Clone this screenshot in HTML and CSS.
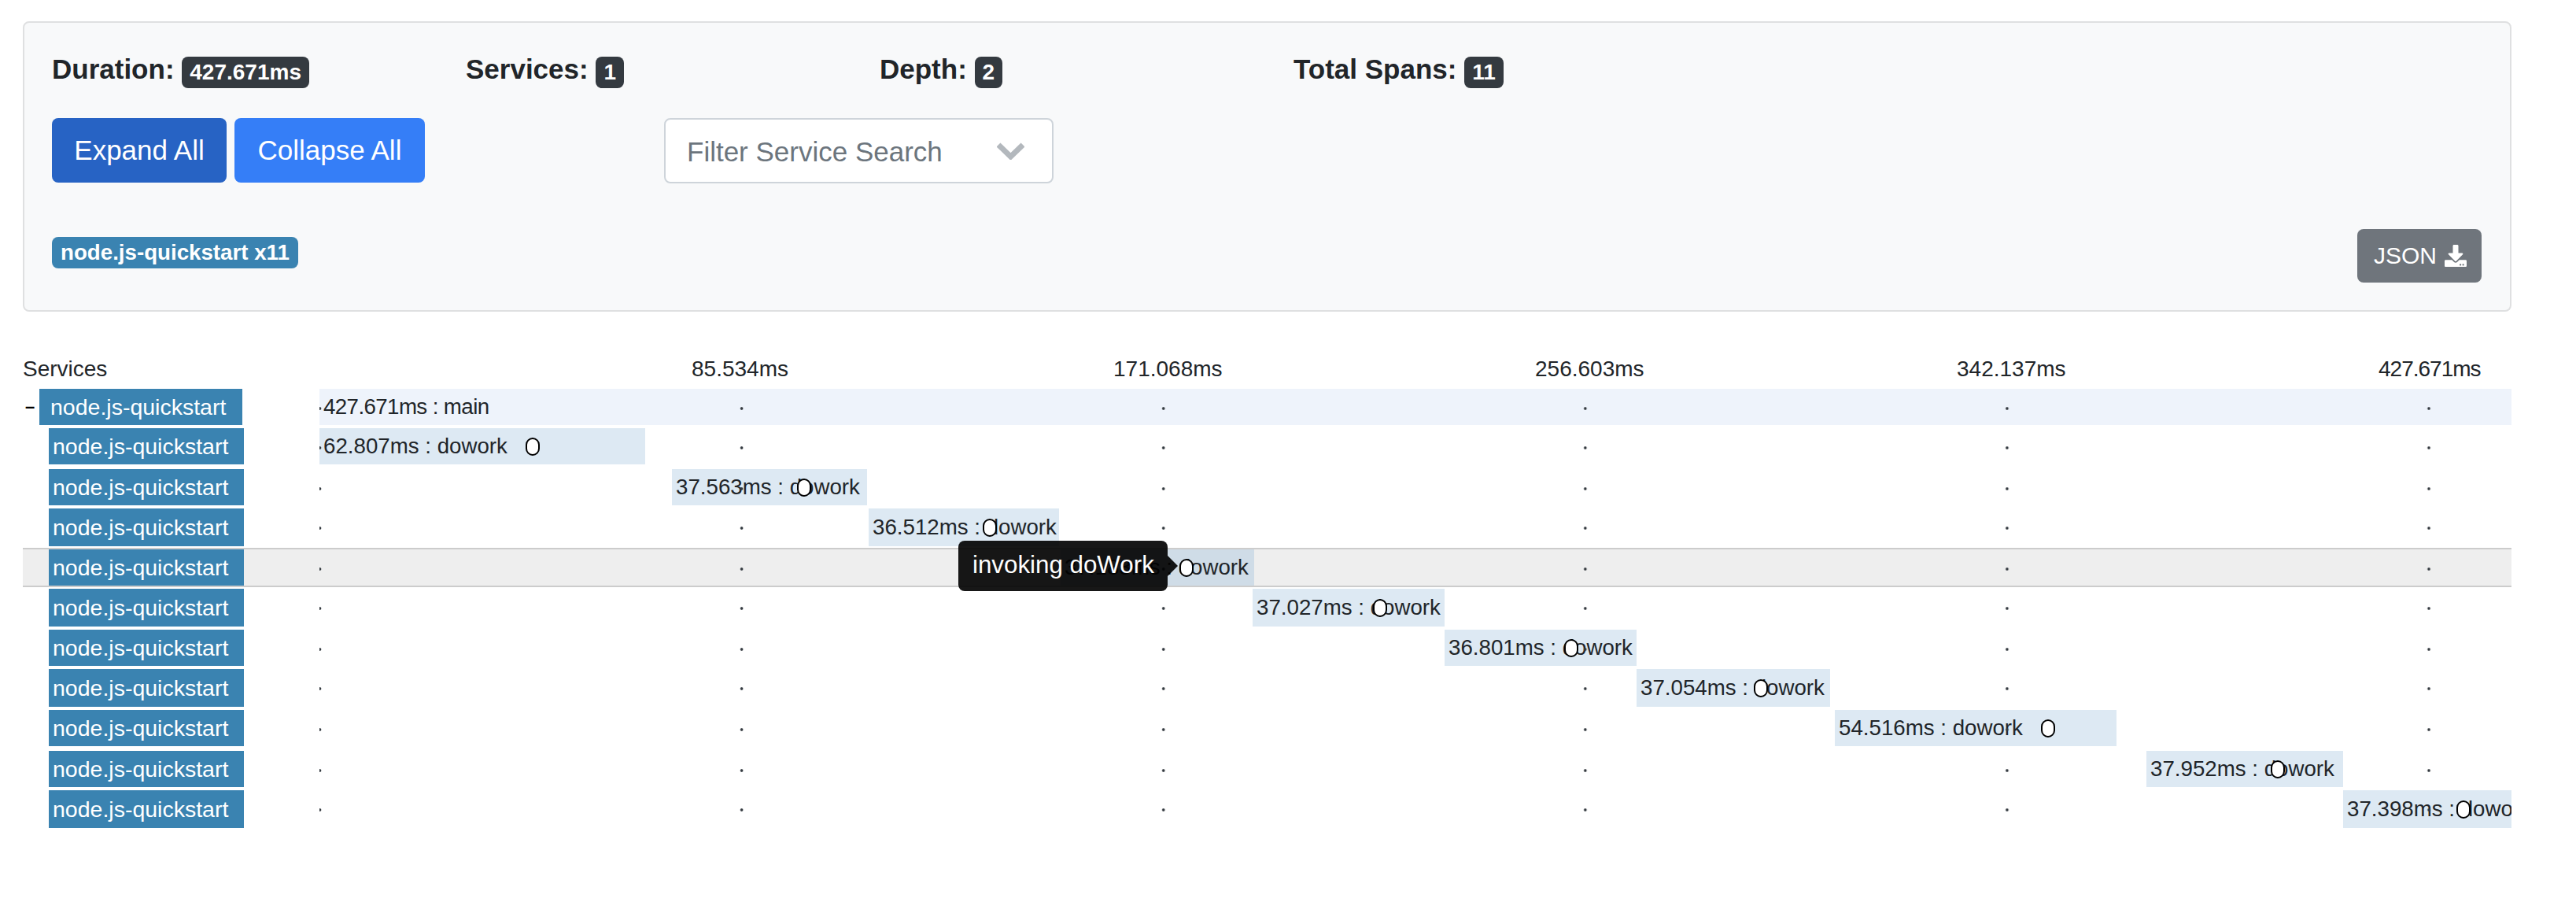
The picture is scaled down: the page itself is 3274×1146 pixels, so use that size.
FILE: index.html
```html
<!DOCTYPE html>
<html>
	<head>
		<title>Trace</title>
		<link rel="stylesheet" href="styles.css">
	</head>
	<body>
		<div class="card">
			<div class="stats">
				<div class="stat">Duration: <span class="badge">427.671ms</span></div>
				<div class="stat">Services: <span class="badge">1</span></div>
				<div class="stat">Depth: <span class="badge">2</span></div>
				<div class="stat">Total Spans: <span class="badge">11</span></div>
			</div>
			<div class="controls">
				<button class="btn btn-active">Expand All</button>
				<button class="btn">Collapse All</button>
				<div class="filter">
					<span>Filter Service Search</span>
					<svg class="chevron" viewBox="0 0 35 22"><path d="M2 3 L17.5 18 L33 3" fill="none" stroke="#b3b8bd" stroke-width="7"/></svg>
				</div>
			</div>
			<div class="footer">
				<span class="service-badge">node.js-quickstart x11</span>
				<button class="btn-json">JSON
					<svg class="download" viewBox="0 0 512 512"><path fill="#fff" d="M216 0h80c13.3 0 24 10.7 24 24v168h87.7c17.8 0 26.7 21.5 14.1 34.1L269.7 378.3c-7.5 7.5-19.8 7.5-27.3 0L90.1 226.1c-12.6-12.6-3.7-34.1 14.1-34.1H192V24c0-13.3 10.7-24 24-24zm296 376v112c0 13.3-10.7 24-24 24H24c-13.3 0-24-10.7-24-24V376c0-13.3 10.7-24 24-24h146.7l49 49c20.1 20.1 52.5 20.1 72.6 0l49-49H488c13.3 0 24 10.7 24 24zm-124 88c0-11-9-20-20-20s-20 9-20 20 9 20 20 20 20-9 20-20zm64 0c0-11-9-20-20-20s-20 9-20 20 9 20 20 20 20-9 20-20z"/></svg>
				</button>
			</div>
		</div>

		<div class="scale">
			<div class="scale-title">Services</div>
			<div class="scale-label">85.534ms</div>
			<div class="scale-label">171.068ms</div>
			<div class="scale-label">256.603ms</div>
			<div class="scale-label">342.137ms</div>
			<div class="scale-label scale-last">427.671ms</div>
		</div>

		<div class="row row-root">
			<span class="toggle">–</span>
			<div class="service">node.js-quickstart</div>
			<div class="timeline">
				<div class="span span-root" style="left:0;width:2786px">427.671ms : main</div>
			</div>
		</div>
		<div class="row row-gap">
			<div class="service">node.js-quickstart</div>
			<div class="timeline">
				<div class="span" style="left:0;width:414px">62.807ms : dowork</div>
				<i class="log" style="left:262px"></i>
			</div>
		</div>
		<div class="row">
			<div class="service">node.js-quickstart</div>
			<div class="timeline">
				<div class="span" style="left:448px;width:248px">37.563ms : dowork</div>
				<i class="log" style="left:607px"></i>
			</div>
		</div>
		<div class="row row-tall">
			<div class="service">node.js-quickstart</div>
			<div class="timeline">
				<div class="span" style="left:698px;width:242px">36.512ms : dowork</div>
				<i class="log" style="left:843px"></i>
			</div>
		</div>
		<div class="row row-hover">
			<div class="service">node.js-quickstart</div>
			<div class="timeline">
				<div class="span" style="left:942px;width:246px">37.183ms : dowork</div>
				<i class="log" style="left:1093px"></i>
			</div>
			<div class="tooltip">invoking doWork</div>
		</div>
		<div class="row row-tall">
			<div class="service">node.js-quickstart</div>
			<div class="timeline">
				<div class="span" style="left:1186px;width:244px">37.027ms : dowork</div>
				<i class="log" style="left:1339px"></i>
			</div>
		</div>
		<div class="row">
			<div class="service">node.js-quickstart</div>
			<div class="timeline">
				<div class="span" style="left:1430px;width:244px">36.801ms : dowork</div>
				<i class="log" style="left:1582px"></i>
			</div>
		</div>
		<div class="row row-tall">
			<div class="service">node.js-quickstart</div>
			<div class="timeline">
				<div class="span" style="left:1674px;width:246px">37.054ms : dowork</div>
				<i class="log" style="left:1823px"></i>
			</div>
		</div>
		<div class="row row-gap">
			<div class="service">node.js-quickstart</div>
			<div class="timeline">
				<div class="span" style="left:1926px;width:358px">54.516ms : dowork</div>
				<i class="log" style="left:2188px"></i>
			</div>
		</div>
		<div class="row">
			<div class="service">node.js-quickstart</div>
			<div class="timeline">
				<div class="span" style="left:2322px;width:250px">37.952ms : dowork</div>
				<i class="log" style="left:2480px"></i>
			</div>
		</div>
		<div class="row row-tall">
			<div class="service">node.js-quickstart</div>
			<div class="timeline">
				<div class="span" style="left:2572px;width:214px">37.398ms : dowork</div>
				<i class="log" style="left:2716px"></i>
			</div>
		</div>
	</body>
</html>
```

FILE: styles.css
```css
body {
	margin: 0;
	padding: 27px 82px 0 29px;
	background: #fff;
	color: #212529;
	font-family: "Liberation Sans", Arial, sans-serif;
	font-size: 28px;
	overflow: hidden;
}

/* summary card */
.card {
	box-sizing: border-box;
	height: 369px;
	padding: 43px 36px 0 35px;
	background: #f8f9fa;
	border: 2px solid #dfe0e1;
	border-radius: 8px;
}
.stats {
	display: flex;
	height: 40px;
}
.stat {
	width: 526px;
	font-size: 35px;
	font-weight: bold;
	line-height: 31px;
}
.badge {
	display: inline-block;
	height: 40px;
	padding: 0 10px;
	background: #343a40;
	border-radius: 8px;
	color: #fff;
	font-size: 28px;
	line-height: 40px;
	vertical-align: top;
}
.controls {
	display: flex;
	gap: 10px;
	margin-top: 38px;
}
.btn {
	box-sizing: border-box;
	width: 242px;
	height: 82px;
	padding: 0;
	background: #357ef7;
	border: 0;
	border-radius: 8px;
	color: #fff;
	font-family: inherit;
	font-size: 35px;
}
.btn-active {
	width: 222px;
	background: #2763c4;
}
.filter {
	box-sizing: border-box;
	display: flex;
	align-items: center;
	justify-content: space-between;
	width: 495px;
	height: 83px;
	margin-left: 294px;
	padding: 3px 35px 0 27px;
	background: #fff;
	border: 2px solid #ced4da;
	border-radius: 8px;
	color: #6c757d;
	font-size: 35px;
}
.chevron {
	width: 35px;
	height: 22px;
	margin-top: -3px;
}
.footer {
	display: flex;
	align-items: flex-start;
	justify-content: space-between;
	margin-top: 58px;
}
.service-badge {
	margin-top: 10px;
	height: 40px;
	padding: 0 11px;
	background: #3a83b1;
	border-radius: 8px;
	color: #fff;
	font-size: 27.7px;
	font-weight: bold;
	line-height: 40px;
}
.btn-json {
	display: flex;
	align-items: center;
	gap: 10px;
	box-sizing: border-box;
	width: 158px;
	height: 68px;
	padding: 0 0 0 21px;
	background: #6f757c;
	border: 0;
	border-radius: 8px;
	color: #fff;
	font-family: inherit;
	font-size: 30px;
}
.download {
	width: 28px;
	height: 28px;
}

/* time scale */
.scale {
	display: flex;
	margin: 52px 0 4px;
	line-height: 42px;
}
.scale-title {
	flex: none;
	width: 850px;
}
.scale-label {
	flex: none;
	width: 536px;
}
.scale-last {
	width: auto;
	letter-spacing: -1px;
}

/* span rows */
.row {
	position: relative;
	display: flex;
	height: 46px;
	margin-bottom: 4px;
}
.row-tall {
	height: 48px;
}
.row-gap {
	margin-bottom: 6px;
}
.row-hover {
	background: #eee;
	box-shadow: 0 -2px #ccc, 0 2px #ccc;
}
.toggle {
	width: 18px;
	margin-left: 3px;
	color: #000;
	font-size: 22px;
	font-weight: bold;
	line-height: 46px;
}
.service {
	box-sizing: border-box;
	display: flex;
	align-items: center;
	width: 248px;
	margin-left: 33px;
	padding-left: 5px;
	background: #3a83b1;
	color: #fff;
	font-size: 28.5px;
}
.row-root .service {
	width: 258px;
	margin-left: 0;
	padding-left: 14px;
}
.timeline {
	position: absolute;
	top: 0;
	bottom: 0;
	left: 377px;
	width: 2786px;
	overflow: hidden;
}
.timeline::after {
	content: "";
	position: absolute;
	top: 0;
	right: 0;
	bottom: 0;
	left: 0;
	background-image: radial-gradient(circle, #343a40 1.4px, transparent 2.2px);
	background-size: 536.1px 6px;
	background-repeat: repeat-x;
	background-position: -267.5px 22px;
}
.span {
	position: absolute;
	top: 0;
	bottom: 0;
	box-sizing: border-box;
	display: flex;
	align-items: center;
	padding-left: 5px;
	background: #dde9f3;
	font-size: 27.7px;
	overflow: hidden;
	white-space: nowrap;
}
.span-root {
	background: #eef3fb;
	letter-spacing: -0.6px;
}
.row-hover .span {
	background: #cfdce7;
}
.log {
	position: absolute;
	top: 50%;
	box-sizing: border-box;
	width: 18px;
	height: 23px;
	margin-top: -11px;
	background: #fff;
	border: 2px solid #000;
	border-radius: 9px;
	z-index: 1;
}
.tooltip {
	position: absolute;
	top: -11px;
	left: 1189px;
	box-sizing: border-box;
	width: 266px;
	height: 64px;
	padding-left: 18px;
	background: rgba(0, 0, 0, 0.91);
	border-radius: 8px;
	color: #fff;
	font-size: 31.3px;
	line-height: 62px;
	z-index: 2;
}
.tooltip::after {
	content: "";
	position: absolute;
	top: 19px;
	left: 266px;
	border-top: 13px solid transparent;
	border-bottom: 13px solid transparent;
	border-left: 13px solid rgba(0, 0, 0, 0.91);
}
```
